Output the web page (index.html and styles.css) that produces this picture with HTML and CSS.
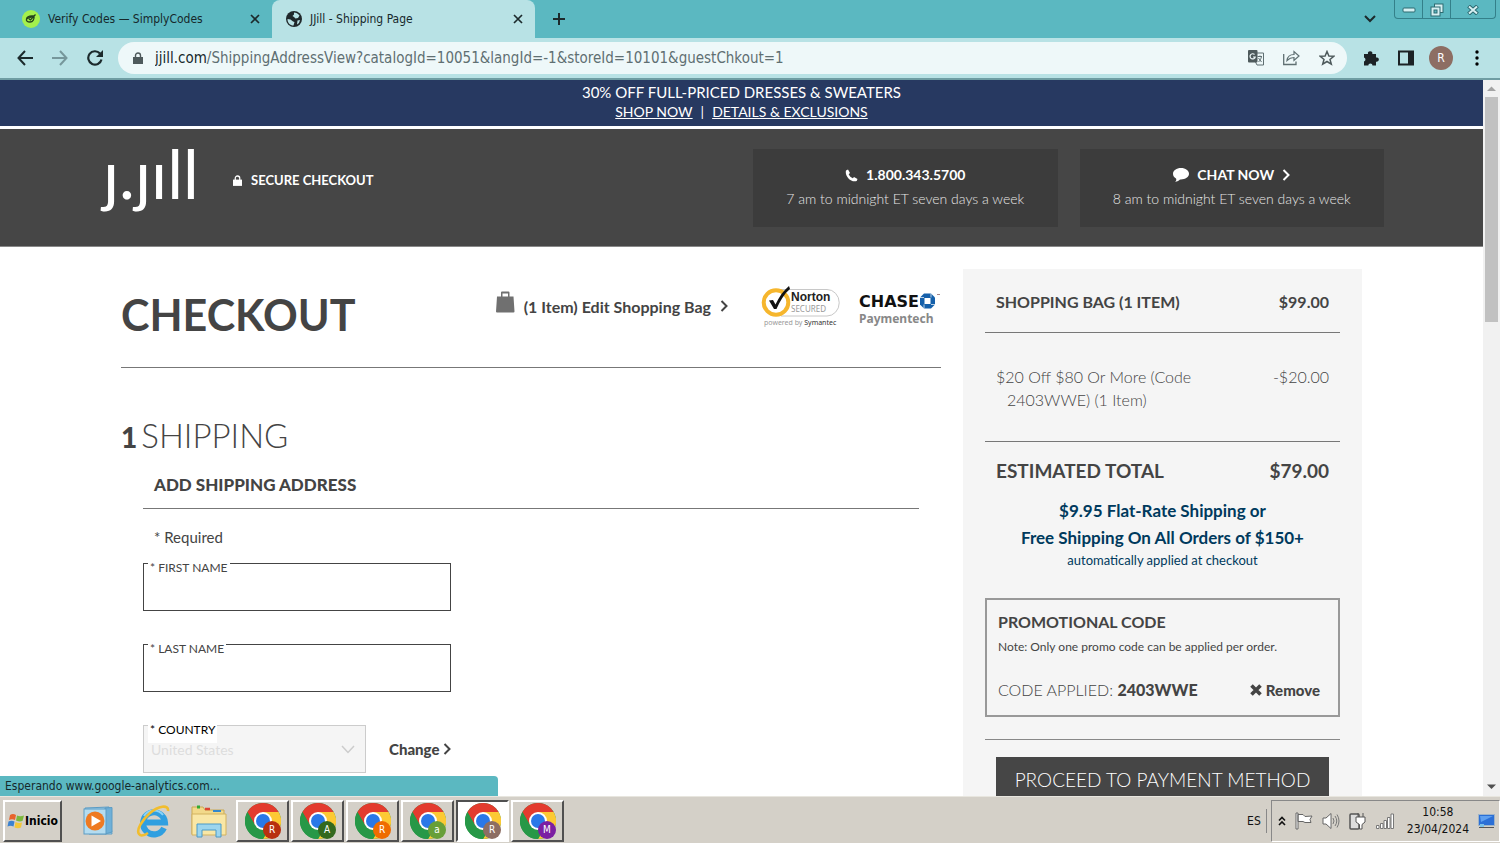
FILE: index.html
```html
<!DOCTYPE html>
<html lang="en">
<head>
<meta charset="utf-8">
<title>JJill - Shipping Page</title>
<link rel="stylesheet" href="styles.css">
</head>
<body>
<svg class="defs" aria-hidden="true">
  <symbol id="chrome" viewBox="0 0 36 36">
    <circle cx="18" cy="18" r="18" fill="#279847"/>
    <path d="M18 18 2.4 9A18 18 0 0 1 33.6 9Z" fill="#e33b2e"/>
    <path d="M18 9H33.6A18 18 0 0 1 18 36L25.8 22.5Z" fill="#fcc934"/>
    <path d="M2.4 9 10.2 22.5 18 18V9Z" fill="#e33b2e"/>
    <path d="M2.4 9A18 18 0 0 0 18 36L25.8 22.5 10.2 22.5Z" fill="#279847"/>
    <circle cx="18" cy="18" r="9" fill="#fff"/>
    <circle cx="18" cy="18" r="7" fill="#2a78e8"/>
  </symbol>
  <symbol id="close" viewBox="0 0 10 10"><path d="M1 1 9 9M9 1 1 9" stroke="#1c2a2c" stroke-width="1.7" fill="none"/></symbol>
  <symbol id="chev" viewBox="0 0 8 12"><path d="M1.5 1 6.5 6 1.5 11" stroke="currentColor" stroke-width="2" fill="none"/></symbol>
  <symbol id="lock" viewBox="0 0 10 12"><path d="M0 5H10V12H0Z" fill="currentColor"/><path d="M2.500 5.500V3.500A2.500 2.500 0 0 1 7.500 3.500V5.500" stroke="currentColor" stroke-width="1.400" fill="none"/></symbol>
</svg>

<div class="tabstrip">
  <div class="tab">
    <svg width="18" height="18" viewBox="0 0 18 18"><circle cx="9" cy="9" r="9" fill="#a4f04c"/><path d="M4.500 9C5 6.500 7.500 5.500 12 6L13.500 4.500M12 6C12.500 9 11 12 8 12 5.500 12 4 11 4.500 9ZM7 9 8.500 10 12 6" stroke="#24401c" stroke-width="1.300" fill="none"/></svg>
    <span class="tab-title">Verify Codes — SimplyCodes</span>
    <button class="icon-btn" aria-label="Close tab"><svg width="10" height="10"><use href="#close"/></svg></button>
  </div>
  <div class="tab tab-active">
    <svg width="16" height="16" viewBox="0 0 16 16"><circle cx="8" cy="8" r="8" fill="#20282b"/><path d="M8 1.500C10 1.500 12 2.500 13.500 4.500L12 7 9.500 7.500 8 6 6.500 5 8 3.500ZM1.500 8 4.500 8.500 7 10.500 8.500 11 7.500 14.500C4 14.500 1.500 12 1.500 8ZM11.500 9.500 14 9 13 12 11 13.500Z" fill="#b8e2e5"/></svg>
    <span class="tab-title">JJill - Shipping Page</span>
    <button class="icon-btn" aria-label="Close tab"><svg width="10" height="10"><use href="#close"/></svg></button>
  </div>
  <button class="icon-btn new-tab" aria-label="New tab"><svg width="14" height="14" viewBox="0 0 14 14"><path d="M7 1V13M1 7H13" stroke="#1c2a2c" stroke-width="2"/></svg></button>
  <button class="icon-btn tab-search" aria-label="Search tabs"><svg width="12" height="8" viewBox="0 0 12 8"><path d="M1 1 6 6 11 1" stroke="#1c2a2c" stroke-width="2" fill="none"/></svg></button>
  <div class="winctl">
    <button aria-label="Minimize"><svg width="14" height="6" viewBox="0 0 14 6"><rect x="1" y="1" width="12" height="4" rx="1" fill="#d6f0f2" stroke="#2c6a71"/></svg></button>
    <button aria-label="Restore"><svg width="14" height="14" viewBox="0 0 14 14"><g fill="#d6f0f2" stroke="#2c6a71"><rect x="4.500" y="1" width="8.500" height="8.500"/><rect x="1" y="4" width="9" height="9"/><rect x="4" y="7" width="3" height="3" fill="#5bb8c1"/></g></svg></button>
    <button class="win-close" aria-label="Close"><svg width="12" height="10" viewBox="0 0 12 10"><path d="M1.500 1 10.500 9M10.500 1 1.500 9" stroke="#2c6a71" stroke-width="4"/><path d="M2 1.500 10 8.500M10 1.500 2 8.500" stroke="#d6f0f2" stroke-width="2"/></svg></button>
  </div>
</div>

<div class="toolbar">
  <button class="icon-btn" aria-label="Back"><svg width="16" height="16" viewBox="0 0 16 16"><path d="M16 8H2M8 1 1.500 8 8 15" stroke="#1c2a2c" stroke-width="2" fill="none"/></svg></button>
  <button class="icon-btn" aria-label="Forward"><svg width="16" height="16" viewBox="0 0 16 16"><path d="M0 8H14M8 1 14.500 8 8 15" stroke="#76979b" stroke-width="2" fill="none"/></svg></button>
  <button class="icon-btn" aria-label="Reload"><svg width="16" height="16" viewBox="0 0 16 16"><path d="M14.500 9.500A6.700 6.700 0 1 1 13 3.500" stroke="#1c2a2c" stroke-width="2.200" fill="none"/><path d="M16 0V7H9Z" fill="#1c2a2c"/></svg></button>
  <div class="omnibox">
    <svg class="url-lock" width="10" height="12"><use href="#lock"/></svg>
    <span class="url"><b>jjill.com</b>/ShippingAddressView?catalogId=10051&amp;langId=-1&amp;storeId=10101&amp;guestChkout=1</span>
    <button class="icon-btn" aria-label="Translate"><svg width="16" height="16" viewBox="0 0 16 16"><path d="M7 3H15.500V15H9L7.500 12" fill="#eef8f9" stroke="#5f6f72"/><rect width="9.500" height="12.500" rx="1" fill="#4e5a5c"/><path d="M6.500 4.500A2.600 2.600 0 1 0 7.200 7H5" stroke="#eef8f9" stroke-width="1.200" fill="none"/><path d="M9.500 6.500H14M12 5.500V6.500M13.500 6.500C13 9 12 10.500 10.500 12M10.500 8 13.500 12" stroke="#5f6f72" fill="none"/></svg></button>
    <button class="icon-btn" aria-label="Share"><svg width="17" height="16" viewBox="0 0 17 16"><path d="M.700 4V14.500H13V11.500" stroke="#5f6f72" stroke-width="1.300" fill="none"/><path d="M4 10.500C4.500 6.500 7 4.500 11 4.500V1.500L16 6 11 10.500V7.500C8 7.500 6 8.500 4 10.500Z" stroke="#5f6f72" stroke-width="1.200" fill="none"/></svg></button>
    <button class="icon-btn" aria-label="Bookmark"><svg width="16" height="16" viewBox="0 0 16 16"><path d="M8 1.500 9.900 6 14.800 6.300 11 9.400 12.300 14.200 8 11.500 3.700 14.200 5 9.400 1.200 6.300 6.100 6Z" stroke="#4e5a5c" stroke-width="1.500" fill="none"/></svg></button>
  </div>
  <button class="icon-btn" aria-label="Extensions"><svg width="16" height="16" viewBox="0 0 16 16"><path d="M1 4H5A2.200 2.200 0 1 1 9.300 4H13V7.500A2.200 2.200 0 1 1 13 11.700V15.500H9.500A2.100 2.100 0 0 0 5.300 15.500H1V11.500A2.100 2.100 0 0 0 1 7.500Z" fill="#1c2225"/></svg></button>
  <button class="icon-btn" aria-label="Side panel"><svg width="16" height="16" viewBox="0 0 16 16"><path d="M0 .500H16V15.500H0ZM2 2.500V13.500H10V2.500Z" fill="#1c2225" fill-rule="evenodd"/></svg></button>
  <button class="avatar" aria-label="Profile">R</button>
  <button class="icon-btn" aria-label="Menu"><svg width="4" height="16" viewBox="0 0 4 16"><circle cx="2" cy="2" r="1.700"/><circle cx="2" cy="8" r="1.700"/><circle cx="2" cy="14" r="1.700"/></svg></button>
</div>

<div class="viewport">
  <div class="page">
    <div class="promo">
      <p class="promo-title">30% OFF FULL-PRICED DRESSES &amp; SWEATERS</p>
      <p><a href="#">SHOP NOW</a><span class="bar">|</span><a href="#">DETAILS &amp; EXCLUSIONS</a></p>
    </div>
    <header class="site-header">
      <div class="header-inner">
        <a class="logo" href="#" aria-label="J.Jill">ȷ.ȷıll</a>
        <span class="secure"><svg width="9" height="11" viewBox="0 0 10 12"><use href="#lock"/></svg>SECURE CHECKOUT</span>
        <div class="contact">
          <a class="contact-box" href="#">
            <strong><svg width="13" height="13" viewBox="0 0 13 13"><path d="M1 1.500 3 .500 5 4 3.700 5.200C4.500 7 6 8.500 7.800 9.300L9 8 12.500 10 11.700 12C6 14-.500 7 1 1.500Z" fill="#fff"/></svg>1.800.343.5700</strong>
            <span>7 am to midnight ET seven days a week</span>
          </a>
          <a class="contact-box" href="#">
            <strong><svg width="16" height="14" viewBox="0 0 16 14"><path d="M8 0C12.500 0 16 2.500 16 5.800 16 9.200 12 11.800 7 11.500 6 12.800 4.500 13.500 2 13.800 3.500 12.500 3.500 11.500 3 10.500 1 9.500 0 7.800 0 5.800 0 2.500 3.500 0 8 0Z" fill="#fff"/></svg>CHAT NOW<svg width="8" height="12"><use href="#chev"/></svg></strong>
            <span>8 am to midnight ET seven days a week</span>
          </a>
        </div>
      </div>
    </header>

    <main class="main">
      <section class="checkout">
        <div class="title-row">
          <h1>CHECKOUT</h1>
          <a class="edit-bag" href="#"><svg class="bag" width="19" height="22" viewBox="0 0 19 22"><path d="M1 5.500H17.500L18.500 20.500Q18.500 21.500 17.500 21.500H1Q0 21.500 0 20.500ZM5 6V1.500Q5 .500 6 .500H12.500Q13.500 .500 13.500 1.500V6" fill="#707070"/><path d="M6.500 5.500V2.500H12V5.500Z" fill="#fff"/></svg>(1 Item) Edit Shopping Bag<svg width="8" height="12"><use href="#chev"/></svg></a>
          <div class="seals">
            <svg width="80" height="42" viewBox="0 0 80 42" role="img" aria-label="Norton Secured, powered by Symantec">
              <path d="M20 4.500H66A12 13 0 0 1 66 31H20" fill="#fff" stroke="#c8c8c8"/>
              <circle cx="15" cy="17.500" r="12.300" fill="#fff" stroke="#f6b62d" stroke-width="4"/>
              <path d="M8 15.500 12 15 14.500 19.500C18 12 22 6 28 1L29 4C23 9 19 16 15.500 24H13Z" fill="#111"/>
              <text x="30" y="16" class="norton">Norton</text>
              <text x="30" y="27" class="secured">SECURED</text>
              <text x="3" y="40" class="powered">powered by <tspan class="symantec">Symantec</tspan></text>
            </svg>
            <svg width="82" height="42" viewBox="0 0 82 42" role="img" aria-label="Chase Paymentech">
              <text x="0" y="22" class="chase">CHASE</text>
              <path d="M65 8.500H72L76 12.500V19.500L72 23.500H65L61 19.500V12.500Z" fill="#1560aa"/>
              <path d="M61 12.500H65M72 8.500V12.500M76 19.500H72M65 23.500V19.500" stroke="#fff" stroke-width=".7"/>
              <rect x="65.500" y="13" width="6" height="6" fill="#fff"/>
              <text x="0" y="38" class="paymentech">Paymentech</text>
              <path d="M78 9.500H81" stroke="#a88"/>
            </svg>
          </div>
        </div>

        <h2><b>1</b> <span>SHIPPING</span></h2>
        <form class="ship-form">
          <h3>ADD SHIPPING ADDRESS</h3>
          <p class="required">* Required</p>
          <div class="field"><label for="fn">* FIRST NAME</label><input id="fn" type="text"></div>
          <div class="field"><label for="ln">* LAST NAME</label><input id="ln" type="text"></div>
          <div class="country-row">
            <div class="field field-country"><label for="ct">* COUNTRY</label>
              <select id="ct" disabled><option>United States</option></select>
              <svg class="select-arrow" width="14" height="9" viewBox="0 0 14 9"><path d="M1 1 7 7.500 13 1" stroke="#ccc" stroke-width="1.500" fill="none"/></svg>
            </div>
            <a class="change" href="#">Change<svg width="8" height="12"><use href="#chev"/></svg></a>
          </div>
        </form>
      </section>

      <aside class="summary">
        <div class="sum-row sum-head"><span>SHOPPING BAG (1 ITEM)</span><span>$99.00</span></div>
        <div class="sum-row sum-offer"><span class="offer">$20 Off $80 Or More (Code 2403WWE) (1 Item)</span><span>-$20.00</span></div>
        <div class="sum-row sum-total"><span>ESTIMATED TOTAL</span><span>$79.00</span></div>
        <div class="ship-note">
          <p>$9.95 Flat-Rate Shipping or</p>
          <p>Free Shipping On All Orders of $150+</p>
          <small>automatically applied at checkout</small>
        </div>
        <div class="promo-code">
          <h4>PROMOTIONAL CODE</h4>
          <p>Note: Only one promo code can be applied per order.</p>
          <div class="applied"><span>CODE APPLIED: <b>2403WWE</b></span>
            <button type="button"><svg width="12" height="12" viewBox="0 0 12 12"><path d="M1.500 1.500 10.500 10.500M10.500 1.500 1.500 10.500" stroke="#444" stroke-width="3.600"/></svg>Remove</button></div>
        </div>
        <div class="proceed-wrap"><button class="proceed" type="button">PROCEED TO PAYMENT METHOD</button></div>
      </aside>
    </main>
  </div>

  <div class="scrollbar" aria-hidden="true">
    <svg width="17" height="17" viewBox="0 0 17 17"><path d="M4 11 8.500 6.500 13 11Z" fill="#a3a3a3"/></svg>
    <div class="track"><div class="thumb"></div></div>
    <svg width="17" height="17" viewBox="0 0 17 17"><path d="M4 5.500 8.500 10 13 5.500Z" fill="#505050"/></svg>
  </div>
  <div class="status">Esperando www.google-analytics.com...</div>
</div>

<div class="taskbar">
  <button class="start"><svg width="18" height="18" viewBox="0 0 18 18"><path d="M3 3Q6 1 9 3L8 8Q5 6.500 2 8Z" fill="#e8632c"/><path d="M10 3.500Q13 5 17 3.500L15.500 9Q12.500 10 9 8.500Z" fill="#7cb83c"/><path d="M1.500 9.500Q4.500 8 7.500 9.500L6.500 14.500Q3.500 13 .500 14.500Z" fill="#3b82d0"/><path d="M8.500 10Q12 11.500 15 10.500L14 15.500Q11 17 7.500 15.500Z" fill="#f3c73a"/></svg>Inicio</button>
  <div class="launch">
    <svg width="32" height="30" viewBox="0 0 32 30"><path d="M2 2 26 1 29 28 6 28Z" fill="#9fd0ea" stroke="#5c9cc4"/><path d="M22 2 29 1.500V26L22 28Z" fill="#6fb0d8" stroke="#5c9cc4"/><rect x="1" y="3" width="22" height="25" fill="#b4dcf0" stroke="#5c9cc4"/><circle cx="12" cy="15" r="9.500" fill="#ee7a22"/><path d="M8.500 9.500 18 15 8.500 20.500Z" fill="#fff"/></svg>
    <svg width="34" height="34" viewBox="0 0 34 34"><path d="M28 24A11 11 0 1 1 29 18.500H10" fill="none" stroke="#2f9fe0" stroke-width="6"/><path d="M27 11A11.500 11.500 0 0 0 8 12" fill="none" stroke="#8bd3f8" stroke-width="2"/><path d="M32 7C33 0 22 2 14 9 6 16 0 26 3 30 5 33 9 31 12 29" fill="none" stroke="#f1bd2e" stroke-width="2.600"/></svg>
    <svg width="36" height="34" viewBox="0 0 36 34"><path d="M1 3H12L14 6H33V30H1Z" fill="#f2d98a" stroke="#c9a954"/><path d="M1 10H35V31H1Z" fill="#f9e7a6" stroke="#d3b25e"/><path d="M6 3H9" stroke="#3a3" stroke-width="3"/><path d="M14 5H19" stroke="#d43" stroke-width="2.500"/><path d="M22 7H30" stroke="#38c" stroke-width="2"/><path d="M6 33V20H30V33H25V26H11V33Z" fill="#9cd5ee" stroke="#4a9ac8"/></svg>
  </div>
  <div class="tasks">
    <button class="task" aria-label="Chrome R"><svg width="36" height="36"><use href="#chrome"/></svg><span class="badge b-red">R</span></button>
    <button class="task" aria-label="Chrome A"><svg width="36" height="36"><use href="#chrome"/></svg><span class="badge b-dgreen">A</span></button>
    <button class="task" aria-label="Chrome R"><svg width="36" height="36"><use href="#chrome"/></svg><span class="badge b-orange">R</span></button>
    <button class="task" aria-label="Chrome a"><svg width="36" height="36"><use href="#chrome"/></svg><span class="badge b-green">a</span></button>
    <button class="task task-on" aria-label="Chrome R"><svg width="36" height="36"><use href="#chrome"/></svg><span class="badge b-brown">R</span></button>
    <button class="task" aria-label="Chrome M"><svg width="36" height="36"><use href="#chrome"/></svg><span class="badge b-purple">M</span></button>
  </div>
  <span class="lang">ES</span>
  <div class="tray">
    <svg width="8" height="10" viewBox="0 0 8 10"><path d="M1 4.500 4 1.500 7 4.500M1 9 4 6 7 9" stroke="#111" stroke-width="1.600" fill="none"/></svg>
    <svg width="18" height="18" viewBox="0 0 18 18"><path d="M1 1H3V17H1ZM3 2.500H8L10 4.500 17 4 15 7.500 16 10.500H10L8 9.500H3Z" fill="#fff" stroke="#666"/></svg>
    <svg width="18" height="18" viewBox="0 0 18 18"><path d="M1 6H4L9 1.500V16.500L4 12H1Z" fill="#fff" stroke="#666"/><path d="M11 6Q13 9 11 12M13 4Q16.500 9 13 14M15 2.500Q19 9 15 15.500" stroke="#777" fill="none"/></svg>
    <svg width="18" height="18" viewBox="0 0 18 18"><rect x="1" y="2" width="9" height="15" rx="1" fill="#ddd" stroke="#555" stroke-width="1.500"/><path d="M7 5H16V10L13 12.500V17H10.500V12.500L7 10ZM9 1V5M14 1V5" fill="#fff" stroke="#555"/></svg>
    <svg width="18" height="16" viewBox="0 0 18 16"><path d="M.500 12.500H3V15.500H.500ZM4.500 10.500H7V15.500H4.500ZM8 7.500H10.500V15.500H8ZM11.500 4.500H14V15.500H11.500ZM15 1H17.500V15.500H15Z" fill="#fff" stroke="#777"/></svg>
    <div class="clock"><div>10:58</div><div>23/04/2024</div></div>
    <svg width="17" height="14" viewBox="0 0 17 14"><rect x=".500" y=".500" width="16" height="11" fill="#2b6fd6" stroke="#9fb4c8"/><path d="M2 2H15L3 8Z" fill="#5fa0f0"/><path d="M1 13.500H16" stroke="#555"/><rect x="2" y="10" width="4" height="3" fill="#7cc2e8"/></svg>
  </div>
</div>
</body>
</html>
```
FILE: styles.css
```css
* { box-sizing: border-box; }
body {
  margin: 0;
  height: 100vh;
  display: flex;
  flex-direction: column;
  overflow: hidden;
  background: #fff;
  color: #444;
  font-family: Lato, "Liberation Sans", sans-serif;
}
h1, h2, h3, h4, p { margin: 0; }
a { color: inherit; text-decoration: none; }
button { font-family: inherit; }
svg { flex: none; display: block; }
.defs { position: absolute; width: 0; height: 0; }

.tabstrip, .toolbar, .status, .taskbar { font-family: "DejaVu Sans Condensed", "DejaVu Sans", sans-serif; }
.icon-btn { border: 0; background: none; padding: 0; display: flex; }

/* Tabs */
.tabstrip { flex: none; display: flex; align-items: center; height: 38px; background: #5bb8c1; }
.tab { width: 272px; height: 38px; padding: 0 12px 0 22px; display: flex; align-items: center; gap: 8px; font-size: 12px; color: #16282b; }
.tab-title { flex: 1; white-space: nowrap; }
.tab-active { width: 263px; padding-left: 14px; background: #b8e2e5; border-radius: 8px 8px 0 0; }
.new-tab { margin-left: 17px; }
.tab-search { margin-left: auto; margin-right: 18px; }
.winctl { align-self: flex-start; display: flex; height: 19px; margin-right: 4px; border: 1px solid #34808a; border-top: 0; border-radius: 0 0 4px 4px; }
.winctl button { width: 28px; border: 0; border-right: 1px solid #34808a; background: none; padding: 2px 0 0; display: flex; align-items: center; justify-content: center; }
.winctl .win-close { width: 44px; border-right: 0; }

/* Toolbar */
.toolbar { flex: none; display: flex; align-items: center; gap: 19px; height: 42px; padding: 0 21px 0 17px; background: #b8e2e5; border-bottom: 2px solid #6f9da3; }
.omnibox { flex: 1; display: flex; align-items: center; gap: 19px; height: 32px; margin-right: -3px; margin-left: -4px; padding: 0 12px 0 15px; border-radius: 16px; background: #eef8f9; }
.url-lock { color: #4e5a5c; margin-right: -7px; }
.url { flex: 1; font-size: 15px; color: #5f6f72; white-space: nowrap; overflow: hidden; }
.url b { font-weight: 400; color: #16282b; }
.avatar { width: 24px; height: 24px; margin: 0 3px 0 -4px; border: 0; border-radius: 50%; padding: 0; background: #8d6e63; color: #fff; font-size: 12px; }

/* Viewport */
.viewport { position: relative; flex: 1; min-height: 0; display: flex; }
.page { flex: 1; min-width: 0; overflow: hidden; }
.scrollbar { flex: none; display: flex; flex-direction: column; width: 17px; background: #f1f1f1; }
.track { flex: 1; padding: 0 2px; }
.thumb { height: 33%; background: #c1c1c1; }
.status { position: absolute; left: 0; bottom: 0; width: 498px; height: 20px; padding-left: 5px; background: #5bb8c1; border-radius: 0 4px 0 0; font-size: 12px; line-height: 20px; color: #16282b; }

/* Site header */
.promo { padding: 3px 0 5px; background: #273961; color: #fff; font-size: 14px; line-height: 19px; text-align: center; }
.promo-title { font-size: 15px; }
.promo a { text-decoration: underline; }
.bar { margin: 0 8px; }
.site-header { margin-top: 3px; background: #464646; border-bottom: 1px solid #888; }
.header-inner { display: flex; align-items: flex-start; max-width: 1285px; margin: 0 auto; padding: 20px 0 19px; color: #fff; }
.logo { width: 130px; padding-left: 4px; font-size: 67px; line-height: 48px; }
.secure { display: flex; align-items: center; gap: 9px; margin-left: 4px; padding-top: 22px; font-size: 13px; line-height: 18px; font-weight: 700; }
.contact { display: flex; gap: 22px; width: 631px; margin-left: auto; }
.contact-box { flex: 1; height: 78px; padding-top: 14px; background: #3c3c3c; text-align: center; font-size: 14px; line-height: 24px; font-weight: 300; color: #e6e6e6; }
.contact-box strong { display: flex; align-items: center; justify-content: center; gap: 8px; color: #fff; font-weight: 700; }

/* Checkout column */
.main { display: grid; grid-template-columns: 820fr 399fr; gap: 22px; max-width: 1241px; margin: 0 auto; align-items: start; }
.title-row { display: flex; justify-content: space-between; height: 121px; padding-top: 38px; border-bottom: 1px solid #777; }
h1 { font-size: 43px; line-height: 60px; font-weight: 700; }
.edit-bag { display: flex; align-items: center; gap: 9px; height: 42px; margin-left: auto; font-size: 16px; font-weight: 700; }
.bag { margin-bottom: 8px; }
.seals { display: flex; gap: 18px; margin-left: 33px; }
.norton { font: 700 12px "Liberation Sans", sans-serif; fill: #222; }
.secured { font: 8px "Noto Sans", sans-serif; fill: #999; }
.powered { font: 7px "Noto Sans", sans-serif; fill: #999; }
.symantec { fill: #333; }
.chase { font: 700 16px "DejaVu Sans", sans-serif; fill: #111; }
.paymentech { font: 700 12px "Noto Sans", sans-serif; fill: #888; }
h2 { display: flex; align-items: baseline; gap: 4px; margin-top: 47px; font-size: 33px; line-height: 40px; font-weight: 300; }
h2 b { font-weight: 900; font-size: 28px; line-height: 28px; }
.ship-form { padding: 0 22px; }
h3 { padding: 18px 11px 11px; border-bottom: 1px solid #777; font-size: 17px; line-height: 24px; font-weight: 900; }
.required { padding: 16px 11px 14px; font-size: 15px; line-height: 24px; }
.field { position: relative; width: 308px; height: 48px; margin-bottom: 33px; }
.field label { position: absolute; left: 5px; top: -4px; z-index: 1; padding: 0 2px; background: #fff; font-size: 12px; line-height: 18px; }
.field input, .field select { width: 100%; height: 100%; border: 1px solid #444; border-radius: 0; background: #fff; padding: 8px; font-family: inherit; font-size: 14px; }
.country-row { display: flex; gap: 23px; }
.field-country { width: 223px; }
.field-country label { color: #000; height: 22px; }
.field-country select { appearance: none; border-color: #ccc; background: #f5f5f5; color: #ddd; opacity: 1; padding: 8px 7px; }
.select-arrow { position: absolute; right: 11px; top: 20px; }
.change { display: flex; align-items: center; gap: 4px; height: 48px; font-size: 15px; font-weight: 900; }

/* Order summary */
.summary { margin-top: 22px; padding: 11px 22px 40px; background: #f5f5f5; }
.sum-row { display: flex; justify-content: space-between; padding: 0 11px; border-bottom: 1px solid #777; }
.sum-head { padding: 10px 11px 18px; font-size: 16px; line-height: 24px; font-weight: 700; }
.sum-offer { padding: 32px 11px 30px; font-size: 16px; line-height: 23px; font-weight: 300; }
.offer { width: 205px; padding-left: 11px; text-indent: -11px; }
.sum-total { padding: 17px 11px 14px; border: 0; font-size: 19px; line-height: 24px; font-weight: 700; }
.ship-note { text-align: center; color: #003a5d; font-size: 17px; line-height: 27px; font-weight: 700; }
.ship-note small { display: block; font-size: 13px; line-height: 18px; font-weight: 400; }
.promo-code { margin-top: 29px; padding: 10px 18px 13px 11px; border: 2px solid #999; }
h4 { font-size: 16px; line-height: 24px; font-weight: 700; }
.promo-code p { font-size: 12px; line-height: 26px; }
.applied { display: flex; justify-content: space-between; margin-top: 18px; font-size: 16px; line-height: 24px; font-weight: 300; }
.applied b { font-weight: 900; }
.applied button { display: flex; align-items: center; gap: 4px; border: 0; background: none; padding: 0; font-size: 15px; font-weight: 900; color: #444; }
.proceed-wrap { margin-top: 22px; padding: 17px 11px 0; border-top: 1px solid #888; }
.proceed { width: 100%; height: 44px; border: 0; background: #464646; color: #fff; font-size: 19px; font-weight: 300; white-space: nowrap; }

/* Taskbar */
.taskbar { flex: none; display: flex; align-items: center; height: 47px; padding: 2px 0 0 3px; background: #d4d0c8; border-top: 1px solid #e8e6df; color: #111; font-size: 12px; }
.start, .task { border: 2px solid; border-color: #fff #505050 #505050 #fff; background: #d4d0c8; padding: 0; display: flex; align-items: center; justify-content: center; height: 42px; }
.start { width: 59px; font-size: 12px; font-weight: 700; }
.launch { display: flex; align-items: center; gap: 21px; margin-left: 21px; }
.tasks { display: flex; gap: 2px; margin-left: 9px; }
.task { position: relative; width: 53px; }
.task-on { background: #fff; border-color: #505050 #fff #fff #505050; }
.badge { position: absolute; right: 6px; bottom: 1px; width: 18px; height: 18px; border-radius: 50%; color: #fff; font-size: 10px; line-height: 18px; }
.b-red { background: #b8300f; }
.b-dgreen { background: #33691e; }
.b-orange { background: #ef6c00; }
.b-green { background: #689f38; }
.b-brown { background: #8d6e63; }
.b-purple { background: #7b1fa2; }
.lang { margin-left: auto; padding-right: 5px; border-right: 1px solid #888; line-height: 24px; }
.tray { display: flex; align-items: center; gap: 9px; height: 42px; margin-left: 4px; padding: 0 4px 0 6px; border: 1px solid; border-color: #888 #fff #fff #888; }
.clock { margin-left: 4px; text-align: center; line-height: 17px; }
```
